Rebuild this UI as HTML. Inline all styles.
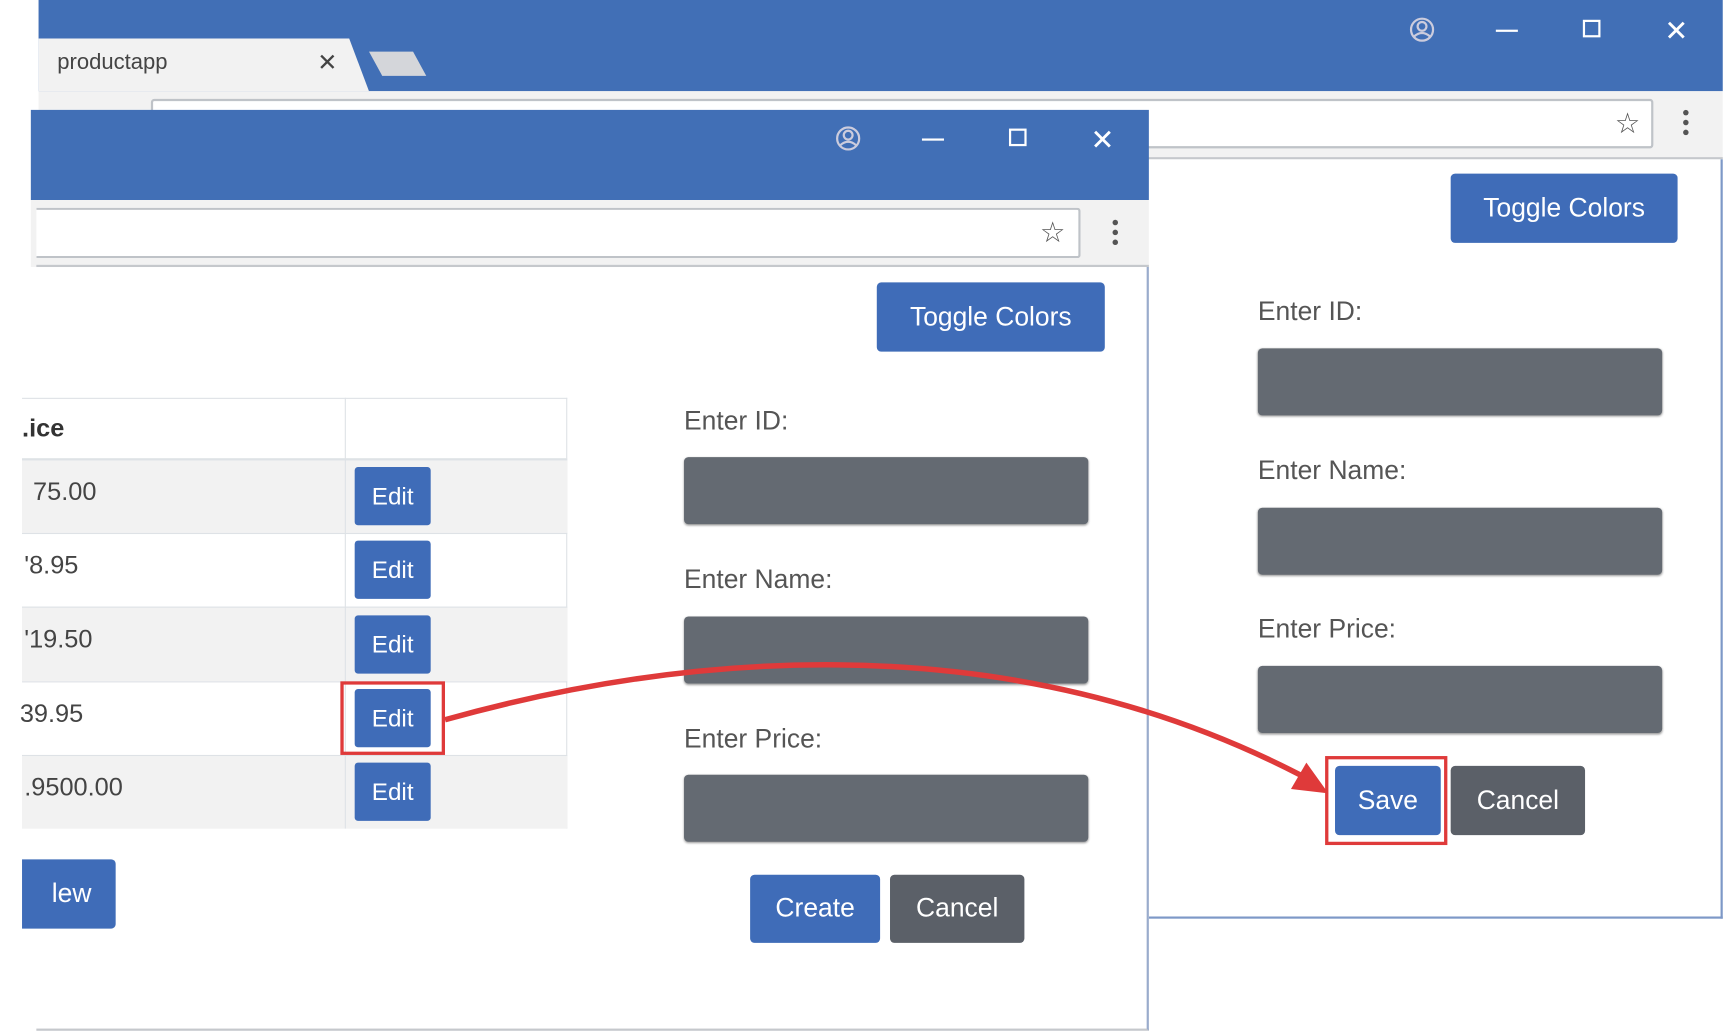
<!DOCTYPE html>
<html><head><meta charset="utf-8"><style>
html,body{margin:0;padding:0;background:#fff;width:1725px;height:1034px;overflow:hidden}
#w{position:absolute;left:0;top:0;width:1566px;height:941px;transform-origin:0 0;transform:scale(1.1015,1.0989);font-family:"Liberation Sans",sans-serif}
.a{position:absolute;box-sizing:border-box}
.blue{background:#416fb6}
.btn{position:absolute;box-sizing:border-box;color:#fff;font-size:24px;display:flex;align-items:center;justify-content:center;border-radius:4px}
.pb{background:#3f6cb8}
.gb{background:#5b6068}
.inp{position:absolute;background:#646a72;border-radius:4px;box-shadow:0 1px 2px #999}
.lbl{position:absolute;font-size:24px;color:#555}
.ctrl{position:absolute;color:#fff;font-size:22px}
.edit{position:absolute;left:322px;width:69px;height:53px;background:#3f6cb8;color:#fff;font-size:22px;display:flex;align-items:center;justify-content:center;border-radius:3px}
.price{position:absolute;left:22px;font-size:23px;color:#444}
</style></head><body><div id="w">
<!-- back window -->
<div class="a blue" style="left:35px;top:0;width:1529px;height:83px"></div>
<svg class="a" style="left:35px;top:35px" width="360" height="48"><polygon points="0,0 282,0 300,48 0,48" fill="#f2f2f2"/><polygon points="300,12 340,12 352,34 312,34" fill="#d4d6da"/></svg>
<div class="a" style="left:52px;top:46px;font-size:20px;color:#444">productapp</div>
<div class="a" style="left:288px;top:44px;font-size:22px;color:#444">✕</div>
<svg class="a" style="left:1278px;top:14px" width="26" height="26"><circle cx="13" cy="13" r="10" fill="none" stroke="#ccd" stroke-width="2"/><circle cx="13" cy="10" r="4" fill="none" stroke="#ccd" stroke-width="2"/><path d="M6 19 Q13 13 20 19" fill="none" stroke="#ccd" stroke-width="2"/></svg>
<div class="a" style="left:1358px;top:27px;width:20px;height:2px;background:#fff"></div>
<div class="a" style="left:1437px;top:18px;width:16px;height:16px;border:2px solid #fff"></div>
<div class="ctrl" style="left:1511px;top:13px;font-size:26px">✕</div>
<div class="a" style="left:35px;top:83px;width:1529px;height:62px;background:#f2f2f2"></div>
<div class="a" style="left:137px;top:90px;width:1364px;height:45px;background:#fff;border:2px solid #bfc3c8;border-radius:3px"></div>
<div class="a" style="left:1466px;top:97px;font-size:26px;color:#555">☆</div>
<div class="a" style="left:1528px;top:100px;width:5px;height:5px;border-radius:50%;background:#555;box-shadow:0 9px 0 #555,0 18px 0 #555"></div>
<div class="a" style="left:35px;top:143px;width:1529px;height:2px;background:#c5c8cc"></div>
<div class="a" style="left:1043px;top:145px;width:521px;height:691px;border-right:2px solid #7d98c7;border-bottom:2px solid #7d98c7;background:#fff"></div>
<div class="btn pb" style="left:1317px;top:158px;width:206px;height:63px">Toggle Colors</div>
<div class="lbl" style="left:1142px;top:270px">Enter ID:</div>
<div class="inp" style="left:1142px;top:317px;width:367px;height:61px"></div>
<div class="lbl" style="left:1142px;top:415px">Enter Name:</div>
<div class="inp" style="left:1142px;top:462px;width:367px;height:61px"></div>
<div class="lbl" style="left:1142px;top:559px">Enter Price:</div>
<div class="inp" style="left:1142px;top:606px;width:367px;height:61px"></div>
<div class="btn pb" style="left:1212px;top:697px;width:96px;height:63px">Save</div>
<div class="a" style="left:1203px;top:688px;width:111px;height:81px;border:3px solid #df3a3a"></div>
<div class="btn gb" style="left:1317px;top:697px;width:122px;height:63px">Cancel</div>
<!-- front window -->
<div class="a blue" style="left:28px;top:100px;width:1015px;height:82px"></div>
<svg class="a" style="left:757px;top:113px" width="26" height="26"><circle cx="13" cy="13" r="10" fill="none" stroke="#ccd" stroke-width="2"/><circle cx="13" cy="10" r="4" fill="none" stroke="#ccd" stroke-width="2"/><path d="M6 19 Q13 13 20 19" fill="none" stroke="#ccd" stroke-width="2"/></svg>
<div class="a" style="left:837px;top:126px;width:20px;height:2px;background:#fff"></div>
<div class="a" style="left:916px;top:117px;width:16px;height:16px;border:2px solid #fff"></div>
<div class="ctrl" style="left:990px;top:112px;font-size:26px">✕</div>
<div class="a" style="left:28px;top:182px;width:1015px;height:61px;background:#f2f2f2"></div>
<div class="a" style="left:33px;top:189px;width:948px;height:46px;background:#fff;border:2px solid #bfc3c8;border-left:none;border-radius:0 3px 3px 0"></div>
<div class="a" style="left:944px;top:196px;font-size:26px;color:#555">☆</div>
<div class="a" style="left:1010px;top:200px;width:5px;height:5px;border-radius:50%;background:#555;box-shadow:0 9px 0 #555,0 18px 0 #555"></div>
<div class="a" style="left:33px;top:241px;width:1010px;height:2px;background:#c5c8cc"></div>
<div class="a" style="left:33px;top:243px;width:1010px;height:695px;background:#fff;border-right:2px solid #9aaccc;border-bottom:2px solid #c5c8cc"></div>
<div class="btn pb" style="left:796px;top:257px;width:207px;height:63px">Toggle Colors</div>
<!-- table -->
<div class="a" style="left:20px;top:362px;width:495px;height:392px;border:1px solid #dee2e6;border-left:none"></div>
<div class="a" style="left:20px;top:417px;width:495px;height:68px;background:#f2f2f2"></div>
<div class="a" style="left:20px;top:552px;width:495px;height:68px;background:#f2f2f2"></div>
<div class="a" style="left:20px;top:687px;width:495px;height:67px;background:#f2f2f2"></div>
<div class="a" style="left:20px;top:417px;width:495px;height:2px;background:#dee2e6"></div>
<div class="a" style="left:20px;top:485px;width:495px;height:1px;background:#dee2e6"></div>
<div class="a" style="left:20px;top:552px;width:495px;height:1px;background:#dee2e6"></div>
<div class="a" style="left:20px;top:620px;width:495px;height:1px;background:#dee2e6"></div>
<div class="a" style="left:20px;top:687px;width:495px;height:1px;background:#dee2e6"></div>
<div class="a" style="left:313px;top:362px;width:1px;height:392px;background:#dee2e6"></div>
<div class="a" style="left:20px;top:376px;font-size:23px;font-weight:bold;color:#333">.ice</div>
<div class="price" style="top:434px;left:30px">75.00</div>
<div class="price" style="top:501px">'8.95</div>
<div class="price" style="top:568px">'19.50</div>
<div class="price" style="top:636px;left:18px">39.95</div>
<div class="price" style="top:703px">.9500.00</div>
<div class="edit" style="top:425px">Edit</div>
<div class="edit" style="top:492px">Edit</div>
<div class="edit" style="top:560px">Edit</div>
<div class="edit" style="top:627px">Edit</div>
<div class="edit" style="top:694px">Edit</div>
<div class="a" style="left:309px;top:620px;width:95px;height:67px;border:3px solid #df3a3a"></div>
<div class="btn pb" style="left:20px;top:782px;width:85px;height:63px;border-radius:0 4px 4px 0;justify-content:flex-end;padding-right:22px">lew</div>
<!-- form -->
<div class="lbl" style="left:621px;top:370px">Enter ID:</div>
<div class="inp" style="left:621px;top:416px;width:367px;height:61px"></div>
<div class="lbl" style="left:621px;top:514px">Enter Name:</div>
<div class="inp" style="left:621px;top:561px;width:367px;height:61px"></div>
<div class="lbl" style="left:621px;top:659px">Enter Price:</div>
<div class="inp" style="left:621px;top:705px;width:367px;height:61px"></div>
<div class="btn pb" style="left:681px;top:796px;width:118px;height:62px">Create</div>
<div class="btn gb" style="left:808px;top:796px;width:122px;height:62px">Cancel</div>
<!-- arrow -->
<svg class="a" style="left:0;top:0" width="1566" height="941"><path d="M404 655 C 600 600, 900 560, 1180 705" fill="none" stroke="#df3a3a" stroke-width="5"/><polygon points="1206,722 1172,718 1186,694" fill="#df3a3a"/></svg>
</div></body></html>
